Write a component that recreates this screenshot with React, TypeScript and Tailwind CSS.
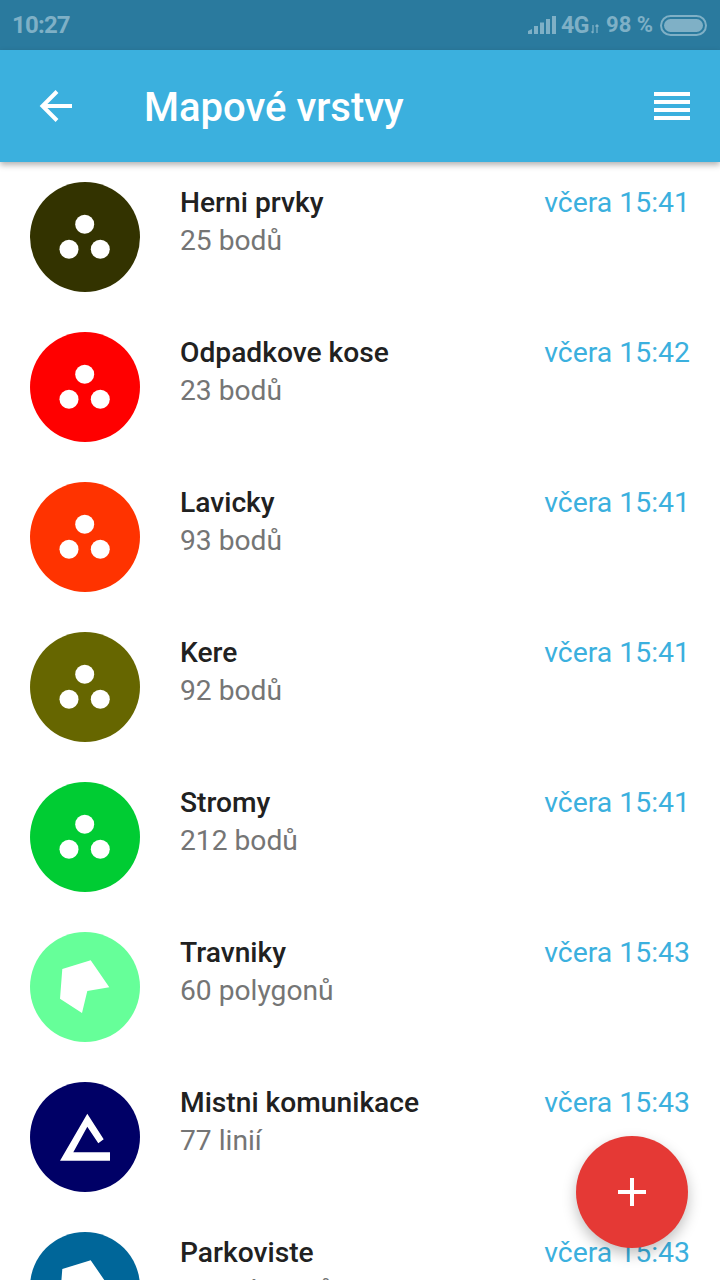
type Layer = {
  name: string
  count: string
  time: string
  color: string
  kind: 'point' | 'polygon' | 'line'
}

const layers: Layer[] = [
  { name: 'Herni prvky', count: '25 bodů', time: 'včera 15:41', color: 'bg-[#333300]', kind: 'point' },
  { name: 'Odpadkove kose', count: '23 bodů', time: 'včera 15:42', color: 'bg-[#ff0000]', kind: 'point' },
  { name: 'Lavicky', count: '93 bodů', time: 'včera 15:41', color: 'bg-[#ff3300]', kind: 'point' },
  { name: 'Kere', count: '92 bodů', time: 'včera 15:41', color: 'bg-[#666600]', kind: 'point' },
  { name: 'Stromy', count: '212 bodů', time: 'včera 15:41', color: 'bg-[#00cc33]', kind: 'point' },
  { name: 'Travniky', count: '60 polygonů', time: 'včera 15:43', color: 'bg-[#66ff99]', kind: 'polygon' },
  { name: 'Mistni komunikace', count: '77 linií', time: 'včera 15:43', color: 'bg-[#000066]', kind: 'line' },
  { name: 'Parkoviste', count: '14 polygonů', time: 'včera 15:43', color: 'bg-[#006699]', kind: 'polygon' },
]

function LayerGlyph({ kind }: { kind: Layer['kind'] }) {
  return (
    <svg viewBox="0 0 110 110" className="h-[110px] w-[110px]" fill="#fff">
      {kind === 'point' && (
        <>
          <circle cx="54.7" cy="42.3" r="9.5" />
          <circle cx="39" cy="67.3" r="9.5" />
          <circle cx="70.3" cy="67.3" r="9.5" />
        </>
      )}
      {kind === 'polygon' && <polygon points="32.3,37 60.7,28.3 79.3,55.3 57.3,59 52,81 30,66.7" />}
      {kind === 'line' && (
        <polygon points="30,78.7 57.3,31.7 73.7,57.3 68.3,61.3 57.3,44.7 43.3,70.3 80,70.3 80,78.7" />
      )}
    </svg>
  )
}

function StatusIcons() {
  return (
    <div className="flex items-center text-[#7fb0c6]">
      <svg viewBox="0 0 28 18" className="h-[18px] w-[28px]" fill="currentColor">
        <path d="M0 18v-3l4-2v5z" />
        <rect x="6" y="10" width="4" height="8" />
        <rect x="12" y="6.5" width="4" height="11.5" />
        <rect x="18" y="3" width="4" height="15" />
        <rect x="24" y="0" width="4" height="18" />
      </svg>
      <span className="ml-[5px] w-[26px] text-[23px] leading-none font-bold tracking-[-0.5px]">4G</span>
      <svg viewBox="0 0 10 10" className="ml-[3px] mt-[8px] h-[10px] w-[10px]" stroke="currentColor" fill="none" strokeWidth="1.3">
        <path d="M3 1v8M1.5 7.5 3 9M7 9V1M5.5 2.5 7 1l1.5 1.5" />
      </svg>
      <span className="ml-[6px] text-[22px] leading-none font-bold">98 %</span>
      <div className="ml-[7px] flex h-[21px] w-[47px] items-center rounded-full border-[2px] border-[#7fb0c6] p-[2px]">
        <div className="h-full w-full rounded-full bg-[#7fb0c6]" />
      </div>
    </div>
  )
}

function LayerRow({ layer }: { layer: Layer }) {
  return (
    <div className="flex h-[150px] shrink-0 pl-[30px] pr-[30px] pt-[20px]">
      <div className={`h-[110px] w-[110px] shrink-0 rounded-full ${layer.color}`}>
        <LayerGlyph kind={layer.kind} />
      </div>
      <div className="ml-[40px] flex-1 pt-[2px]">
        <div className="text-[28.2px] leading-[38px] font-medium text-[#212121]">{layer.name}</div>
        <div className="text-[28.2px] leading-[38px] text-[#757575]">{layer.count}</div>
      </div>
      <div className="pt-[2px] text-[28.4px] leading-[38px] text-[#3bb0de]">{layer.time}</div>
    </div>
  )
}

export default function App() {
  return (
    <div className="relative flex h-[1280px] w-[720px] flex-col overflow-hidden bg-white font-['Roboto',sans-serif]">
      <div className="flex h-[50px] shrink-0 items-center justify-between bg-[#2a7a9e] pl-[12px] pr-[13px]">
        <span className="text-[24px] font-bold tracking-[-0.8px] text-[#7fb0c6]">10:27</span>
        <StatusIcons />
      </div>
      <div className="relative z-10 flex h-[112px] shrink-0 items-center bg-[#3bb0de] shadow-[0_3px_6px_rgba(0,0,0,0.3)]">
        <svg viewBox="0 0 34 34" className="ml-[39px] mt-[-1px] h-[34px] w-[34px]" fill="none" stroke="#fff" strokeWidth="4">
          <path d="M33 17H4M18 2.5 3.5 17 18 31.5" />
        </svg>
        <h1 className="ml-[71px] mt-[4px] flex-1 text-[40px] font-medium text-white">Mapové vrstvy</h1>
        <div className="mr-[30px] flex w-[36px] flex-col gap-[4px]">
          <div className="h-[4px] bg-white" />
          <div className="h-[4px] bg-white" />
          <div className="h-[4px] bg-white" />
          <div className="h-[4px] bg-white" />
        </div>
      </div>
      <div className="flex flex-col">
        {layers.map((l) => (
          <LayerRow key={l.name} layer={l} />
        ))}
      </div>
      <button className="absolute left-[576px] top-[1136px] flex h-[112px] w-[112px] items-center justify-center rounded-full bg-[#e53935] shadow-[0_6px_14px_rgba(0,0,0,0.25)]">
        <svg viewBox="0 0 28 28" className="h-[28px] w-[28px]" fill="#fff">
          <rect x="12" y="0" width="4" height="28" />
          <rect x="0" y="12" width="28" height="4" />
        </svg>
      </button>
    </div>
  )
}
